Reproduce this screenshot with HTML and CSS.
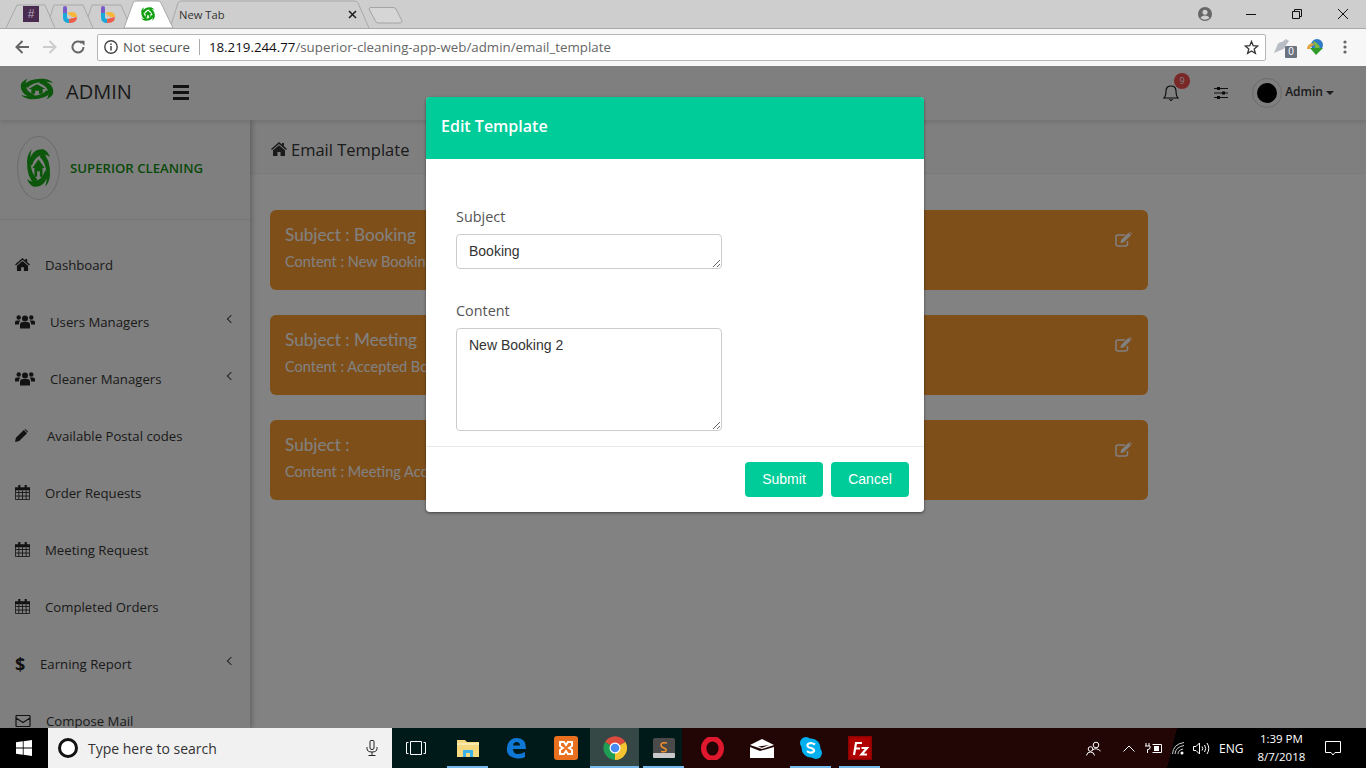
FILE: index.html
```html
<!DOCTYPE html>
<html lang="en">

<head>
    <meta charset="UTF-8">
    <meta name="viewport" content="width=device-width, initial-scale=1.0">
    <title>Email Template</title>
    <link rel="stylesheet" href="styles.css">
</head>

<body>
    <svg class="defs" width="0" height="0">
        <symbol id="swirl" viewBox="0 0 40 40">
            <g fill="currentColor">
                <path d="M5 15 Q11 2 27 3 Q33 4 37 10 Q29 6 21 9 Q14 11 10 18 Z"/>
                <path d="M5 15 Q11 2 27 3 Q33 4 37 10 Q29 6 21 9 Q14 11 10 18 Z" transform="rotate(90 20 20)"/>
                <path d="M5 15 Q11 2 27 3 Q33 4 37 10 Q29 6 21 9 Q14 11 10 18 Z" transform="rotate(180 20 20)"/>
                <path d="M5 15 Q11 2 27 3 Q33 4 37 10 Q29 6 21 9 Q14 11 10 18 Z" transform="rotate(270 20 20)"/>
                <path d="M20 12 L29 20 H26 V28 H22 V23 H18 V28 H14 V20 H11 Z"/>
            </g>
        </symbol>
        <symbol id="home" viewBox="0 0 16 14">
            <path fill="currentColor" d="M8 0 L11 2.6 V1 H13 V4.3 L16 7 L15 8 L8 2 L1 8 L0 7 Z M8 3.2 L14 8.3 V14 H9.5 V10 H6.5 V14 H2 V8.3 Z"/>
        </symbol>
        <symbol id="users" viewBox="0 0 20 14">
            <g fill="currentColor">
                <circle cx="10" cy="4" r="3"/>
                <circle cx="3.7" cy="3" r="2.2"/>
                <circle cx="16.3" cy="3" r="2.2"/>
                <path d="M5 14 V10 Q5 7.500 8 7.500 H12 Q15 7.500 15 10 V14 Z"/>
                <path d="M0 10 V7.500 Q0 6 2 6 H5.500 Q4 7 3.800 10 Z M20 10 V7.500 Q20 6 18 6 H14.500 Q16 7 16.200 10 Z"/>
            </g>
        </symbol>
        <symbol id="pencil" viewBox="0 0 14 14">
            <path fill="currentColor" d="M0 14 L1 9.500 L9.500 1 L13 4.500 L4.500 13 Z M10.500 0.300 Q11 0 11.500 0.300 L13.700 2.500 Q14 3 13.700 3.500 L13.500 3.800 L10.200 0.500 Z"/>
        </symbol>
        <symbol id="calendar" viewBox="0 0 14 14">
            <path fill="currentColor" d="M3 0 H5 V2 H9 V0 H11 V2 H14 V5 H0 V2 H3 Z"/>
            <path fill="none" stroke="currentColor" stroke-width="0.800" d="M0.400 4 V13.600 H13.600 V4 M0.400 7 H13.600 M0.400 10.300 H13.600 M3.600 5 V13.600 M7 5 V13.600 M10.400 5 V13.600"/>
        </symbol>
        <symbol id="edit" viewBox="0 0 18 15">
            <g fill="none" stroke="currentColor" stroke-width="1.500">
                <path d="M12.500 9 V12 Q12.500 14 10.500 14 H3 Q1 14 1 12 V5 Q1 3 3 3 H10"/>
            </g>
            <path fill="currentColor" d="M5.500 11 L6 8 L13.500 0.800 L16 3.200 L8.500 10.500 Z M14.300 0.300 Q15 -0.200 15.500 0.300 L16.800 1.500 Q17.200 2 16.800 2.500 Z"/>
        </symbol>
    </svg>

    <div class="tabstrip">
        <svg class="tabshape" width="1190" height="28">
            <path d="M6 28 L17 5 H45 L55 28 M50 17 L54 5 H83 L93 28 M88 17 L92 5 H121 L131 28 M170 28 L178 3 Q179 1 181 1 H354 Q357 1 358 3 L369 28" fill="none" stroke="#a9a9a9"/>
            <path d="M124 28 L133 3 Q134 1 136 1 H158 Q160 1 161 3 L173 28 Z" fill="#fff" stroke="#a9a9a9"/>
            <path d="M369 9 Q369 7.500 371 7.500 H393 Q395 7.500 396 9 L402 21 Q402 23 400 23 H378 Q376 23 375.500 21 Z" fill="#d6d6d6" stroke="#a4a4a4"/>
        </svg>
        <span class="fav fav-slack">#</span>
        <svg class="fav fav-b" width="14" height="17" viewBox="0 0 14 17">
            <path d="M0 2 Q0 0 2 0 Q4 0 4 2 V7 H0 Z" fill="#7a5bc8"/>
            <path d="M0 7 H4 V11 Q4 13 6 13 V17 Q0 17 0 11 Z" fill="#1aa9d8"/>
            <path d="M4 7 Q14 4 14 11 H9 Z" fill="#f6b73c"/>
            <path d="M6 13 L14 11 Q14 17 6 17 Z" fill="#ee5b4a"/>
        </svg>
        <svg class="fav fav-b2" width="14" height="17" viewBox="0 0 14 17">
            <path d="M0 2 Q0 0 2 0 Q4 0 4 2 V7 H0 Z" fill="#7a5bc8"/>
            <path d="M0 7 H4 V11 Q4 13 6 13 V17 Q0 17 0 11 Z" fill="#1aa9d8"/>
            <path d="M4 7 Q14 4 14 11 H9 Z" fill="#f6b73c"/>
            <path d="M6 13 L14 11 Q14 17 6 17 Z" fill="#ee5b4a"/>
        </svg>
        <svg class="fav fav-green" width="16" height="16"><use href="#swirl"/></svg>
        <span class="tabtitle">New Tab</span>
        <svg class="tabclose" width="9" height="9" viewBox="0 0 9 9">
            <path d="M1 1 L8 8 M8 1 L1 8" stroke="#222" stroke-width="1.600"/>
        </svg>
        <div class="winctl">
            <svg width="14" height="14" viewBox="0 0 14 14">
                <circle cx="7" cy="7" r="7" fill="#666"/>
                <circle cx="7" cy="5.300" r="2.500" fill="#d0d0d0"/>
                <path d="M2.500 11 Q3.500 8.500 7 8.500 Q10.500 8.500 11.500 11 Q7 14.500 2.500 11 Z" fill="#d0d0d0"/>
            </svg>
            <svg class="win-min" width="10" height="10" viewBox="0 0 10 10"><path d="M0 5.500 H10" stroke="#111"/></svg>
            <svg class="win-max" width="10" height="10" viewBox="0 0 10 10"><path d="M0.500 2.500 H7.500 V9.500 H0.500 Z M2.500 2.500 V0.500 H9.500 V7.500 H7.500" fill="none" stroke="#111"/></svg>
            <svg class="win-close" width="10" height="10" viewBox="0 0 10 10"><path d="M0 0 L10 10 M10 0 L0 10" stroke="#111"/></svg>
        </div>
    </div>

    <div class="toolbar">
        <svg class="nav-ic" width="14" height="14" viewBox="0 0 14 14"><path d="M14 7 H2 M7.500 1 L1.500 7 L7.500 13" fill="none" stroke="#666" stroke-width="2"/></svg>
        <svg class="nav-ic" width="14" height="14" viewBox="0 0 14 14"><path d="M0 7 H12 M6.500 1 L12.500 7 L6.500 13" fill="none" stroke="#ccc" stroke-width="2"/></svg>
        <svg class="nav-ic" width="14" height="14" viewBox="0 0 14 14"><path d="M12.500 7 A5.500 5.500 0 1 1 10.800 3" fill="none" stroke="#666" stroke-width="2"/><path d="M8.500 0.800 H13.500 V5.800 Z" fill="#666"/></svg>
        <div class="omnibox">
            <svg width="14" height="14" viewBox="0 0 14 14"><circle cx="7" cy="7" r="6.200" fill="none" stroke="#444" stroke-width="1.400"/><path d="M7 6 V10.500 M7 3.500 V5" stroke="#444" stroke-width="1.500"/></svg>
            <span class="notsecure">Not secure</span>
            <span class="omni-sep"></span>
            <span class="url"><b>18.219.244.77</b>/superior-cleaning-app-web/admin/email_template</span>
            <svg class="star" width="15" height="15" viewBox="0 0 15 15"><path d="M7.500 1.500 L9.200 5.700 L13.800 6 L10.200 8.900 L11.400 13.400 L7.500 11 L3.600 13.400 L4.800 8.900 L1.200 6 L5.800 5.700 Z" fill="none" stroke="#333" stroke-width="1.300"/></svg>
        </div>
        <div class="ext">
            <svg width="16" height="14" viewBox="0 0 16 14"><path d="M1 14 L4 7 Q5 3 9 3 L13 0 L16 2 L13 6 Q12 10 8 11 Z" fill="#b8bcc4"/></svg>
            <span class="ext-badge">0</span>
        </div>
        <svg class="idm" width="17" height="16" viewBox="0 0 17 16">
            <circle cx="10" cy="6" r="6" fill="#2f79c9"/>
            <path d="M6 2 Q10 3 13 8 L9 11 Z" fill="#7fb83f"/>
            <path d="M0 10 Q0 5 6 4 L7 6 Q3 7 3 10 Z" fill="#e2a33a"/>
            <path d="M3 9 H16 L9 16 Z" fill="#2f9a28"/>
        </svg>
        <svg class="dots" width="4" height="14" viewBox="0 0 4 14"><g fill="#666"><circle cx="2" cy="2" r="1.600"/><circle cx="2" cy="7" r="1.600"/><circle cx="2" cy="12" r="1.600"/></g></svg>
    </div>

    <div class="page">
        <header class="topbar">
            <svg class="top-logo" width="38" height="24" viewBox="0 0 40 40" preserveAspectRatio="none"><use href="#swirl" width="40" height="40"/></svg>
            <span class="brand">ADMIN</span>
            <span class="burger"><i></i><i></i><i></i></span>
            <div class="top-right">
                <span class="bell">
                    <svg width="16" height="18" viewBox="0 0 16 18"><path d="M1 14 Q3 12 3 7 Q3 2 8 2 Q13 2 13 7 Q13 12 15 14 Z M6.500 15 Q8 18 9.500 15" fill="none" stroke="#111" stroke-width="1.100"/></svg>
                    <span class="badge">9</span>
                </span>
                <svg class="sliders" width="14" height="12" viewBox="0 0 14 12"><path d="M0 1.500 H14 M0 6 H14 M0 10.500 H14" stroke="#222"/><path d="M3 0 H6 V3 H3 Z M8 4.500 H11 V7.500 H8 Z M3 9 H6 V12 H3 Z" fill="#111"/></svg>
                <span class="avatar"><i></i></span>
                <span class="username">Admin</span>
                <span class="caret"></span>
            </div>
        </header>
        <div class="panel">
            <aside class="sidebar">
                <div class="side-logo">
                    <span class="logo-ring"><svg width="27" height="44" viewBox="0 0 40 40" preserveAspectRatio="none"><use href="#swirl" width="40" height="40"/></svg></span>
                    <span class="side-name">SUPERIOR CLEANING</span>
                </div>
                <ul class="menu">
                    <li><svg width="15" height="13"><use href="#home"/></svg>Dashboard</li>
                    <li><svg width="20" height="15"><use href="#users"/></svg>Users Managers<span class="chev"></span></li>
                    <li><svg width="20" height="15"><use href="#users"/></svg>Cleaner Managers<span class="chev"></span></li>
                    <li><svg class="ic-pencil" width="13" height="13"><use href="#pencil"/></svg>Available Postal codes</li>
                    <li><svg width="15" height="15"><use href="#calendar"/></svg>Order Requests</li>
                    <li><svg width="15" height="15"><use href="#calendar"/></svg>Meeting Request</li>
                    <li><svg width="15" height="15"><use href="#calendar"/></svg>Completed Orders</li>
                    <li><span class="dollar">$</span>Earning Report<span class="chev"></span></li>
                    <li><svg width="16" height="12" viewBox="0 0 16 12"><path d="M1 1.500 Q1 0.500 2 0.500 H14 Q15 0.500 15 1.500 V10.500 Q15 11.500 14 11.500 H2 Q1 11.500 1 10.500 Z M1 3 L8 7.500 L15 3" fill="none" stroke="currentColor" stroke-width="1.200"/></svg>Compose Mail</li>
                </ul>
            </aside>
            <main class="content">
                <h1 class="page-title"><svg width="16" height="14"><use href="#home"/></svg>Email Template</h1>
                <div class="cards">
                    <article class="card">
                        <div>
                            <h2>Subject : Booking</h2>
                            <p>Content : New Booking 2</p>
                        </div>
                        <svg class="card-edit" width="18" height="15"><use href="#edit"/></svg>
                    </article>
                    <article class="card">
                        <div>
                            <h2>Subject : Meeting</h2>
                            <p>Content : Accepted Booking</p>
                        </div>
                        <svg class="card-edit" width="18" height="15"><use href="#edit"/></svg>
                    </article>
                    <article class="card">
                        <div>
                            <h2>Subject :</h2>
                            <p>Content : Meeting Accepted</p>
                        </div>
                        <svg class="card-edit" width="18" height="15"><use href="#edit"/></svg>
                    </article>
                </div>
            </main>
        </div>

        <div class="backdrop">
            <form class="modal">
                <div class="modal-head">Edit Template</div>
                <div class="modal-body">
                    <label for="subject">Subject</label>
                    <textarea id="subject" class="field field-subject">Booking</textarea>
                    <label for="body">Content</label>
                    <textarea id="body" class="field field-content">New Booking 2</textarea>
                </div>
                <div class="modal-foot">
                    <button type="button">Submit</button>
                    <button type="button">Cancel</button>
                </div>
            </form>
        </div>
    </div>

    <footer class="taskbar">
        <div class="startbtn">
            <svg width="16" height="16" viewBox="0 0 16 16"><path d="M0 2.300 L6.800 1.300 V7.600 H0 Z M7.600 1.200 L16 0 V7.600 H7.600 Z M0 8.400 H6.800 V14.700 L0 13.700 Z M7.600 8.400 H16 V16 L7.600 14.800 Z" fill="#fff"/></svg>
        </div>
        <div class="search">
            <span class="cortana"></span>
            <span class="search-text">Type here to search</span>
            <svg class="mic" width="12" height="16" viewBox="0 0 12 16"><path d="M4 1.500 Q4 0.500 5 0.500 H7 Q8 0.500 8 1.500 V8 Q8 9.500 6 9.500 Q4 9.500 4 8 Z M1 7 V8.500 Q1 12 6 12 Q11 12 11 8.500 V7 M6 12 V15.500 M2.500 15.500 H9.500" fill="none" stroke="#222"/></svg>
        </div>
        <div class="task-cell task-view">
            <svg width="20" height="14" viewBox="0 0 20 14"><path d="M4.500 0.500 H15.500 V13.500 H4.500 Z M2.500 1.500 H0.500 V12.500 H2.500 M17.500 1.500 H19.500 V12.500 H17.500" fill="none" stroke="#fff"/></svg>
        </div>
        <div class="task-cell on">
            <svg width="22" height="18" viewBox="0 0 22 18"><path d="M0 1 H8 L10 3 H22 V18 H0 Z" fill="#f6d97e"/><path d="M0 4 H22 V6 H0 Z" fill="#fbe9ae"/><path d="M6 18 V11 H16 V18 H13 V14 H9 V18 Z" fill="#3bb2e8"/></svg>
        </div>
        <div class="task-cell">
            <svg width="21" height="22" viewBox="0 0 21 22"><path d="M1 11 Q2 1 11 1 Q20 1 20 12 H7 Q7 17 12 17 Q16 17 19 15 V20 Q15 22 11 21.500 Q0 20 1 11 Z M7 8.500 H14 Q14 5 10.500 5 Q7.500 5 7 8.500 Z" fill="#0f78d4" fill-rule="evenodd"/></svg>
        </div>
        <div class="task-cell">
            <svg width="24" height="24" viewBox="0 0 24 24"><rect width="24" height="24" rx="3" fill="#e9701f"/><path d="M6 6 H10 L12 9 L14 6 H18 V10 L15 12 L18 14 V18 H14 L12 15 L10 18 H6 V14 L9 12 L6 10 Z" fill="none" stroke="#fff" stroke-width="2"/></svg>
        </div>
        <div class="task-cell active">
            <svg width="24" height="24" viewBox="0 0 24 24">
                <path d="M12 12 L2 6 A12 12 0 0 1 22.400 6 Z" fill="#dd4b3e"/>
                <path d="M12 12 L22.400 6 A12 12 0 0 1 12 24 Z" fill="#f5c431"/>
                <path d="M12 12 L12 24 A12 12 0 0 1 2 6 Z" fill="#1f9d55"/>
                <circle cx="12" cy="12" r="5.500" fill="#fff"/>
                <circle cx="12" cy="12" r="4.300" fill="#4a8af4"/>
            </svg>
        </div>
        <div class="task-cell on">
            <svg width="22" height="22" viewBox="0 0 22 22"><rect y="1" width="22" height="20" rx="2" fill="#4a4a4a"/><rect y="16" width="22" height="5" rx="1" fill="#c9c9c9"/><path d="M14 6 Q8 5 8 8 Q8 10 11 11 Q14 12 13 14 Q12 15 8 14.500" fill="none" stroke="#f2902e" stroke-width="1.500"/></svg>
        </div>
        <div class="task-cell">
            <svg width="23" height="23" viewBox="0 0 23 23"><ellipse cx="11.500" cy="11.500" rx="8.800" ry="9.800" fill="none" stroke="#e0182d" stroke-width="5.400"/></svg>
        </div>
        <div class="task-cell">
            <svg width="24" height="19" viewBox="0 0 24 19"><path d="M0 6 L12 0 L24 6 L12 10 Z" fill="#fff"/><path d="M0 8 L10 12 L24 8 V19 H0 Z" fill="#fff"/><path d="M8 7.500 L19 6 L12 8.800 Z" fill="#220505"/></svg>
        </div>
        <div class="task-cell on">
            <svg width="22" height="22" viewBox="0 0 22 22"><circle cx="6" cy="6" r="6" fill="#00aff0"/><circle cx="16" cy="16" r="6" fill="#00aff0"/><circle cx="11" cy="11" r="9.500" fill="#00aff0"/><path d="M15 7.500 Q13 6 10.500 6 Q7 6.500 7.500 9 Q8 10.500 11 11 Q14.500 12 14 14 Q13 16 9.500 15.500 Q8 15 7 14" fill="none" stroke="#fff" stroke-width="2.200"/></svg>
        </div>
        <div class="task-cell on">
            <svg width="24" height="24" viewBox="0 0 24 24"><rect width="24" height="24" fill="#8f0000"/><rect x="1.500" y="1.500" width="21" height="21" fill="#b00000"/><path d="M6 19 L8 7 H14 M7 12.500 H12 M13.500 12 H19 L13.500 18.500 H19" fill="none" stroke="#fff" stroke-width="2.200"/></svg>
        </div>
        <div class="tray">
            <svg class="tray-people" width="15" height="15" viewBox="0 0 15 15"><g fill="none" stroke="#fff"><circle cx="10" cy="4" r="2.800"/><path d="M6.500 9 Q10 6 14.500 10"/><circle cx="4.500" cy="8" r="2.300"/><path d="M0.500 14.500 Q1 11 4.500 11 Q8 11 8.500 14.500"/></g></svg>
            <svg class="tray-up" width="12" height="7" viewBox="0 0 12 7"><path d="M0.500 6.500 L6 1 L11.500 6.500" fill="none" stroke="#fff"/></svg>
            <svg class="tray-power" width="17" height="12" viewBox="0 0 17 12"><path d="M7.500 2.500 H16.500 V10.500 H7.500" fill="none" stroke="#fff"/><path d="M9 4 H14 V9 H9 Z" fill="#fff"/><path d="M1 1 V4 M4 1 V4 M0 4 H5 V6 Q5 7.500 2.500 7.500 V11" fill="none" stroke="#fff"/></svg>
            <svg class="tray-wifi" width="13" height="13" viewBox="0 0 13 13"><path d="M0.500 12 Q1 2 12 0.500 M3 12 Q3.500 5 12 3.500 M6 12 Q6 8 11 7" fill="none" stroke="#ccc"/><circle cx="10" cy="11" r="1.500" fill="#fff"/></svg>
            <svg class="tray-vol" width="17" height="13" viewBox="0 0 17 13"><path d="M0.500 4.500 H3 L6.500 1 V12 L3 8.500 H0.500 Z M9 4.500 Q10.500 6.500 9 8.500 M11.500 3 Q14 6.500 11.500 10 M14 1 Q17.500 6.500 14 12" fill="none" stroke="#fff"/></svg>
            <span class="tray-lang">ENG</span>
            <span class="clock"><span>1:39 PM</span><span>8/7/2018</span></span>
            <svg class="tray-note" width="16" height="15" viewBox="0 0 16 15"><path d="M0.500 0.500 H15.500 V11.500 H10 L8 14 L6 11.500 H0.500 Z" fill="none" stroke="#fff"/></svg>
        </div>
    </footer>
</body>

</html>
```
FILE: styles.css
```css
* {
    box-sizing: border-box;
}

html,
body {
    margin: 0;
    height: 100%;
    overflow: hidden;
}

body {
    display: flex;
    flex-direction: column;
    font-family: 'Open Sans', sans-serif;
    color: #333;
}

.defs {
    position: absolute;
}

/* browser tabs */
.tabstrip {
    position: relative;
    height: 28px;
    flex: none;
    display: flex;
    align-items: center;
    background-color: #cecece;
}

.tabshape {
    position: absolute;
    left: 0;
    top: 0;
}

.fav {
    position: relative;
    flex: none;
}

.fav-slack {
    margin-left: 23px;
    width: 16px;
    height: 16px;
    background-color: #4a2b50;
    color: #b9a6bc;
    font: 12px/16px 'Liberation Sans', sans-serif;
    text-align: center;
}

.fav-b {
    margin-left: 24px;
}

.fav-b2 {
    margin-left: 24px;
}

.fav-green {
    margin-left: 25px;
    color: #12a012;
}

.tabtitle {
    position: relative;
    margin-left: 23px;
    font-size: 11.2px;
    color: #333;
}

.tabclose {
    position: relative;
    margin-left: 123px;
}

.winctl {
    margin-left: auto;
    display: flex;
    align-items: center;
    padding-right: 18px;
}

.win-min {
    margin-left: 34px;
}

.win-max {
    margin-left: 36px;
}

.win-close {
    margin-left: 36px;
}

/* address bar */
.toolbar {
    height: 38px;
    flex: none;
    display: flex;
    align-items: center;
    padding-left: 15px;
    padding-bottom: 1px;
    background-color: #f7f7f7;
    border-top: 1px solid #a9a9a9;
}

.nav-ic {
    margin-right: 14px;
    flex: none;
}

.omnibox {
    width: 1169px;
    height: 27px;
    margin-left: -2px;
    display: flex;
    align-items: center;
    padding: 0 6px;
    background-color: #fff;
    border: 1px solid #b5b5b5;
    border-radius: 2px;
}

.notsecure {
    margin-left: 5px;
    font-size: 13.2px;
    color: #555;
}

.omni-sep {
    width: 1px;
    height: 16px;
    margin: 0 9px;
    background-color: #aaa;
}

.url {
    font-size: 13.3px;
    color: #666;
}

.url b {
    font-weight: 400;
    color: #111;
}

.star {
    margin-left: auto;
}

.ext {
    position: relative;
    width: 24px;
    height: 22px;
    margin-left: 7px;
    flex: none;
}

.ext-badge {
    position: absolute;
    right: 0;
    bottom: 0;
    width: 12px;
    height: 12px;
    background-color: #6b7280;
    color: #fff;
    font: 10px/12px 'Liberation Sans', sans-serif;
    text-align: center;
    border-radius: 1px;
}

.idm {
    margin-left: 10px;
    flex: none;
}

.dots {
    margin-left: 19px;
    flex: none;
}

/* app under the modal */
.page {
    position: relative;
    flex: 1;
    min-height: 0;
    overflow: hidden;
    background-color: #f5f5f5;
}

.topbar {
    height: 54px;
    display: flex;
    align-items: center;
    padding-left: 18px;
    background-color: #f0f0f0;
    box-shadow: 0 2px 5px rgba(0, 0, 0, 0.12);
    position: relative;
    z-index: 2;
}

.top-logo {
    color: #17a417;
    margin-top: -9px;
}

.brand {
    margin-left: 10px;
    margin-top: -4px;
    font-size: 20px;
    color: #333;
}

.burger {
    margin-left: 41px;
    margin-top: -2px;
    width: 16px;
    display: flex;
    flex-direction: column;
    gap: 3px;
}

.burger i {
    height: 3px;
    background-color: #222;
}

.top-right {
    margin-left: auto;
    display: flex;
    align-items: center;
    padding-right: 32px;
}

.bell {
    position: relative;
    display: flex;
    margin-top: -1px;
}

.badge {
    position: absolute;
    left: 11px;
    top: -11px;
    width: 16px;
    height: 16px;
    border-radius: 50%;
    background-color: #e64a4a;
    color: #eee;
    font-size: 9px;
    line-height: 16px;
    text-align: center;
}

.sliders {
    margin-left: 35px;
}

.avatar {
    margin-left: 24px;
    width: 30px;
    height: 30px;
    display: flex;
    align-items: center;
    justify-content: center;
    border: 1px solid #ccc;
    border-radius: 50%;
}

.avatar i {
    width: 20px;
    height: 20px;
    border-radius: 50%;
    background-color: #000;
}

.username {
    margin-left: 3px;
    font-size: 12px;
    font-weight: 600;
    color: #333;
    margin-top: -3px;
}

.caret {
    margin-left: 3px;
    border: 4px solid transparent;
    border-top-color: #333;
    border-bottom-width: 0;
}

.panel {
    display: flex;
    height: 608px;
}

.sidebar {
    width: 250px;
    flex: none;
    background-color: #f0f0f0;
    box-shadow: 2px 0 5px rgba(0, 0, 0, 0.25);
    position: relative;
    z-index: 1;
}

.side-logo {
    height: 100px;
    display: flex;
    align-items: center;
    padding: 0 0 4px 17px;
    border-bottom: 1px solid #ddd;
}

.logo-ring {
    width: 43px;
    height: 64px;
    display: flex;
    align-items: center;
    justify-content: center;
    border: 1px solid #ccc;
    border-radius: 50%;
    color: #17a417;
}

.side-name {
    margin-left: 10px;
    font-size: 13.2px;
    font-weight: 600;
    color: #128c12;
}

.menu {
    list-style: none;
    margin: 0;
    padding: 16px 0 0;
}

.menu li {
    height: 57px;
    display: flex;
    align-items: center;
    gap: 15px;
    padding: 0 16px 0 15px;
    font-size: 13.2px;
    color: #333;
}

.menu svg {
    flex: none;
    color: #222;
}

.menu .ic-pencil {
    margin-right: 4px;
}

.dollar {
    width: 10px;
    font-size: 18px;
    font-weight: 700;
    color: #222;
}

.chev {
    margin-left: auto;
    margin-top: -6px;
    width: 6px;
    height: 6px;
    border-left: 1px solid #444;
    border-bottom: 1px solid #444;
    transform: rotate(45deg);
}

.content {
    flex: 1;
}

.page-title {
    height: 54px;
    margin: 0;
    display: flex;
    align-items: center;
    gap: 4px;
    padding: 5px 0 0 21px;
    font-size: 16.5px;
    font-weight: 400;
    color: #333;
    background-color: #f0f0f0;
    border-bottom: 1px solid #e6e6e6;
}

.cards {
    display: flex;
    flex-direction: column;
    gap: 25px;
    width: 878px;
    margin: 36px 0 0 20px;
}

.card {
    height: 80px;
    display: flex;
    justify-content: space-between;
    padding: 13px 15px 0 15px;
    background-color: #f09531;
    border-radius: 6px;
    color: #f4f4f4;
    font-family: Lato, sans-serif;
}

.card h2 {
    margin: 0;
    font-size: 17.2px;
    line-height: 24px;
    font-weight: 400;
}

.card p {
    margin: 4px 0 0;
    font-size: 14.5px;
    line-height: 22px;
}

.card-edit {
    margin-top: 9px;
}

/* modal */
.backdrop {
    position: absolute;
    inset: 0;
    z-index: 5;
    display: flex;
    justify-content: center;
    align-items: flex-start;
    padding: 31px 16px 0 0;
    background-color: rgba(0, 0, 0, 0.47);
}

.modal {
    width: 498px;
    height: 415px;
    display: flex;
    flex-direction: column;
    background-color: #fff;
    border-radius: 4px;
    box-shadow: 0 1px 3px rgba(0, 0, 0, 0.5);
    overflow: hidden;
}

.modal-head {
    height: 62px;
    flex: none;
    display: flex;
    align-items: center;
    padding: 0 0 4px 15px;
    background-color: #00cc99;
    color: #fff;
    font-size: 16px;
    font-weight: 600;
}

.modal-body {
    flex: 1;
    padding: 48px 0 0 30px;
}

.modal-body label {
    display: block;
    height: 20px;
    line-height: 20px;
    font-size: 14.4px;
    color: #555;
    margin-bottom: 7px;
}

.field {
    display: block;
    width: 266px;
    padding: 8px 12px;
    font: 14px/16px 'Liberation Sans', sans-serif;
    color: #333;
    background-color: #fff;
    border: 1px solid #ccc;
    border-radius: 4px;
    outline: none;
}

.field-subject {
    height: 35px;
    margin-bottom: 32px;
}

.field-content {
    height: 103px;
}

.modal-foot {
    height: 66px;
    flex: none;
    display: flex;
    justify-content: flex-end;
    gap: 8px;
    padding: 15px 15px 0 0;
    border-top: 1px solid #e9e9e9;
}

.modal-foot button {
    width: 78px;
    height: 35px;
    padding-bottom: 3px;
    background-color: #00cc99;
    color: #fff;
    font: 14px 'Liberation Sans', sans-serif;
    border: none;
    border-radius: 4px;
}

/* windows taskbar */
.taskbar {
    position: relative;
    height: 40px;
    flex: none;
    display: flex;
    color: #fff;
    background-image: linear-gradient(104deg, transparent 1142px, #000 1142px), linear-gradient(to right, #000 392px, #001a1a 392px, #001a1a 682px, #220505 682px);
}

.startbtn {
    width: 48px;
    display: flex;
    align-items: center;
    justify-content: center;
}

.search {
    width: 344px;
    display: flex;
    align-items: center;
    padding: 0 14px 0 10px;
    background-color: #f1f1f1;
}

.cortana {
    width: 20px;
    height: 20px;
    border: 3px solid #111;
    border-radius: 50%;
    background-color: #fff;
}

.search-text {
    margin-left: 10px;
    font-size: 14px;
    color: #333;
}

.mic {
    margin-left: auto;
}

.task-cell {
    position: relative;
    width: 49px;
    display: flex;
    align-items: center;
    justify-content: center;
}

.task-view {
    width: 51px;
    padding-right: 3px;
}

.task-cell.on::after,
.task-cell.active::after {
    content: "";
    position: absolute;
    left: 4px;
    right: 4px;
    bottom: 0;
    height: 2px;
    background-color: #76b9ed;
}

.task-cell.active {
    background-color: #364845;
}

.task-cell.active::after {
    left: 0;
    right: 0;
}

.tray {
    flex: 1;
    display: flex;
    align-items: center;
    padding-right: 25px;
    font-size: 12px;
}

.tray-people {
    margin-left: 202px;
}

.tray-up {
    margin-left: 22px;
}

.tray-power {
    margin-left: 10px;
}

.tray-wifi {
    margin-left: 10px;
}

.tray-vol {
    margin-left: 8px;
}

.tray-lang {
    margin-left: 9px;
}

.clock {
    margin-left: 14px;
    display: flex;
    flex-direction: column;
    align-items: center;
    font-size: 11.5px;
    line-height: 18px;
}

.tray-note {
    margin-left: auto;
}
```
